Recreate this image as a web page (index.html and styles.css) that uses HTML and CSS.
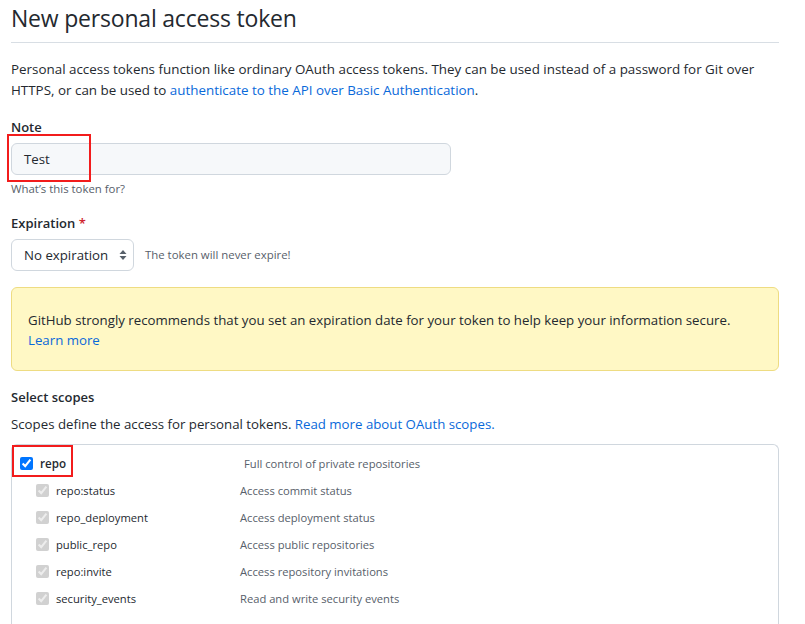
FILE: index.html
```html
<!DOCTYPE html>
<html>
<head>
<meta charset="utf-8">
<link rel="stylesheet" href="styles.css">
</head>
<body>
<div class="page">
  <h1 class="title">New personal access token</h1>
  <p class="intro">Personal access tokens function like ordinary OAuth access tokens. They can be used instead of a password for Git over HTTPS, or can be used to <a href="#">authenticate to the API over Basic Authentication</a>.</p>

  <div class="field note-field">
    <div class="label">Note</div>
    <div class="input-wrap">
      <div class="input">Test</div>
      <div class="mark mark-note"></div>
    </div>
    <div class="hint">What’s this token for?</div>
  </div>

  <div class="field exp-field">
    <div class="label">Expiration <span class="req">*</span></div>
    <div class="exp-row">
      <div class="select">No expiration
        <svg class="arrows" width="8" height="12" viewBox="0 0 8 12"><path d="M4 1 L7.5 5 H0.5 Z M4 11 L7.5 7 H0.5 Z" fill="#57606a"/></svg>
      </div>
      <span class="hint inline">The token will never expire!</span>
    </div>
  </div>

  <div class="flash">
    GitHub strongly recommends that you set an expiration date for your token to help keep your information secure.<br>
    <a href="#">Learn more</a>
  </div>

  <div class="label scopes-label">Select scopes</div>
  <p class="scopes-desc">Scopes define the access for personal tokens. <a href="#">Read more about OAuth scopes.</a></p>

  <div class="scopes">
    <div class="row parent">
      <label class="name"><input type="checkbox" checked><b>repo</b></label>
      <span class="desc">Full control of private repositories</span>
      <div class="mark mark-repo"></div>
    </div>
    <div class="row child"><label class="name"><input type="checkbox" checked disabled>repo:status</label><span class="desc">Access commit status</span></div>
    <div class="row child"><label class="name"><input type="checkbox" checked disabled>repo_deployment</label><span class="desc">Access deployment status</span></div>
    <div class="row child"><label class="name"><input type="checkbox" checked disabled>public_repo</label><span class="desc">Access public repositories</span></div>
    <div class="row child"><label class="name"><input type="checkbox" checked disabled>repo:invite</label><span class="desc">Access repository invitations</span></div>
    <div class="row child"><label class="name"><input type="checkbox" checked disabled>security_events</label><span class="desc">Read and write security events</span></div>
  </div>
</div>
</body>
</html>
```

FILE: styles.css
```css
* { box-sizing: border-box; }
html, body { margin: 0; padding: 0; background: #fff; }
body {
  font-family: "Open Sans", "Noto Sans", sans-serif;
  color: #24292f;
  font-size: 13.25px;
  overflow: hidden;
}
a { color: #0969da; text-decoration: none; }
.page { padding: 0 26px 0 11px; width: 805px; }
.title {
  font-weight: 400;
  font-size: 23px;
  line-height: 36px;
  margin: 0;
  padding-top: 0;
  padding-bottom: 6px;
  border-bottom: 1px solid #d8dee4;
  letter-spacing: -0.2px;
}
.intro { margin: 16px 0 16px; line-height: 21px; font-size: 13.4px; }
.label { font-weight: 600; font-size: 13px; line-height: 20px; }
.req { color: #cf222e; }
.field { position: relative; }
.input-wrap { position: relative; margin-top: 6px; }
.input {
  width: 440px; height: 32px;
  background: #f6f8fa;
  border: 1px solid #d0d7de;
  border-radius: 6px;
  padding: 0 12px;
  line-height: 30px;
}
.mark { position: absolute; border: 2px solid #f21c1c; }
.mark-note { left: -4px; top: -9px; width: 84px; height: 48px; }
.hint { font-size: 11.4px; color: #57606a; line-height: 18px; margin-top: 5px; }
.exp-field { margin-top: 15px; }
.exp-row { display: flex; align-items: center; gap: 11px; margin-top: 6px; }
.hint.inline { margin-top: 0; }
.select {
  height: 32px; width: 123px;
  border: 1px solid #d0d7de;
  border-radius: 6px;
  padding: 0 12px;
  line-height: 30px;
  display: flex; justify-content: space-between; align-items: center;
  font-size: 13.25px;
}
.arrows { margin-right: -6px; }
.flash {
  margin-top: 16px;
  background: #fff8c5;
  border: 1px solid #eedc82;
  border-radius: 6px;
  padding: 22px 16px 20px;
  line-height: 20px;
}
.scopes-label { margin-top: 16px; }
.scopes-desc { margin: 7px 0 10px; line-height: 20px; }
.scopes {
  border: 1px solid #d0d7de;
  border-radius: 6px 6px 0 0;
  border-bottom: none;
  height: 200px;
  padding-top: 5px;
}
.row { display: flex; align-items: center; height: 27px; position: relative; }
.name { display: flex; align-items: center; font-size: 11.2px; }
.name input { margin: 0 7px 0 0; width: 13px; height: 13px; accent-color: #0075ff; }
.parent .name { width: 232px; padding-left: 8px; font-size: 11.6px; }
.parent .name b { font-weight: 600; }
.child .name { width: 228px; padding-left: 24px; }
.desc { font-size: 11.2px; color: #57606a; }
.mark-repo { left: 0; top: -5px; width: 61px; height: 32px; }
```
